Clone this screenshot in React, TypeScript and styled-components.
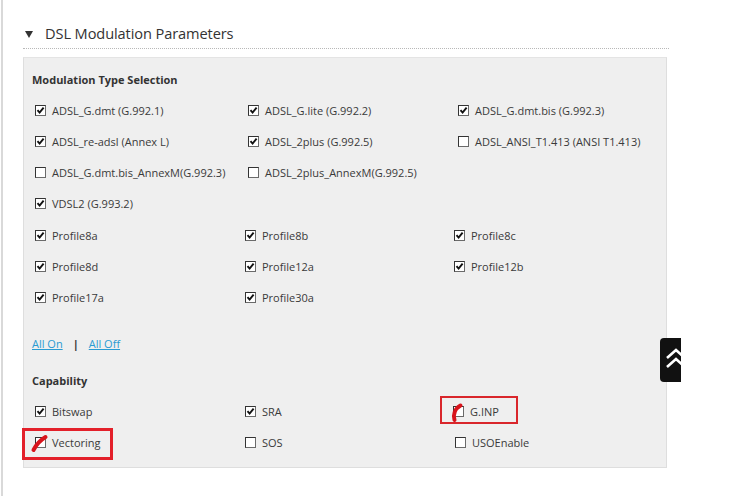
import React from "react";
import styled, { createGlobalStyle } from "styled-components";

const Global = createGlobalStyle`
  html, body { margin: 0; padding: 0; background: #fff; }
  body { font-family: "Open Sans", "Noto Sans", sans-serif; color: #333; }
`;

const Page = styled.div`
  position: relative;
  width: 754px;
  height: 496px;
  box-sizing: border-box;
  border-left: 2px solid #d9d9d9;
  margin-left: 1px;
  padding: 18px 0 0 20px;
`;

const Section = styled.div`
  width: 646px;
`;

const Header = styled.div`
  display: flex;
  align-items: center;
  gap: 12px;
  height: 30px;
  padding-left: 2px;
  border-bottom: 1px dotted #b8b8b8;
`;

const Triangle = styled.span`
  width: 0;
  height: 0;
  border-left: 4px solid transparent;
  border-right: 4px solid transparent;
  border-top: 7px solid #333;
  margin-top: 2px;
`;

const Title = styled.span`
  font-size: 14.6px;
  color: #333;
  letter-spacing: -0.1px;
`;

const Panel = styled.div`
  margin-top: 8px;
  width: 644px;
  box-sizing: border-box;
  background: #efefef;
  border: 1px solid #dedede;
  border-top-color: #e4e4e4;
  padding: 14px 8px 9px 8px;
`;

const Label = styled.div`
  font-size: 11px;
  font-weight: 700;
  line-height: 16px;
  color: #333;
`;

const Grid = styled.div<{ $cols: string; $top: number }>`
  display: grid;
  grid-template-columns: ${(p) => p.$cols};
  grid-auto-rows: 31px;
  margin-top: ${(p) => p.$top}px;
  padding-left: 3px;
`;

const Item = styled.label<{ $mark?: "thick" | "thin"; $shift?: number; $newRow?: boolean }>`
  position: relative;
  display: flex;
  align-items: center;
  gap: 6px;
  font-size: 11px;
  color: #3a3a3a;
  white-space: nowrap;
  margin-left: ${(p) => p.$shift ?? 0}px;
  ${(p) => (p.$newRow ? "grid-column: 1;" : "")}
  ${(p) =>
    p.$mark === "thick"
      ? `&::after{content:"";position:absolute;left:-13px;top:1px;width:85px;height:26px;border:3px solid #e3202a;}`
      : p.$mark === "thin"
      ? `&::after{content:"";position:absolute;left:-13px;top:0px;width:74px;height:24px;border:2px solid #d9262b;}`
      : ""}
`;

const Box = styled.span`
  position: relative;
  width: 11px;
  height: 11px;
  box-sizing: border-box;
  background: #fff;
  border: 1px solid #6a6a6a;
  border-top-color: #333;
  border-left-color: #333;
  display: inline-flex;
  align-items: center;
  justify-content: center;
  flex: none;
`;

const Stroke = styled.svg`
  position: absolute;
  left: -6px;
  top: -6px;
  overflow: visible;
`;

const Links = styled.div`
  display: flex;
  align-items: center;
  gap: 10px;
  margin-top: 23px;
  font-size: 11px;
  line-height: 16px;
`;

const A = styled.a`
  color: #2a9bd2;
  text-decoration: underline;
  cursor: pointer;
`;

const Sep = styled.span`
  color: #333;
  font-weight: 700;
`;

const CapLabel = styled(Label)`
  margin-top: 21px;
`;

const TopButton = styled.div`
  position: absolute;
  left: 657px;
  top: 338px;
  width: 21px;
  height: 44px;
  background: #111;
  border-radius: 4px 0 0 4px;
  overflow: hidden;
`;

const Check = () => (
  <svg width="9" height="9" viewBox="0 0 9 9">
    <path d="M1.5 4.2 L3.6 6.6 L7.6 1.6" stroke="#111" strokeWidth="1.9" fill="none" />
  </svg>
);

type Opt = {
  label: string;
  on: boolean;
  mark?: "thick" | "thin";
  red?: "sweep" | "curve";
  shift?: number;
  newRow?: boolean;
};

const CB = ({ label, on, mark, red, shift, newRow }: Opt) => (
  <Item $mark={mark} $shift={shift} $newRow={newRow}>
    <Box>
      {on && <Check />}
      {red === "sweep" && (
        <Stroke width="20" height="20" viewBox="0 0 20 20">
          <path d="M3.5 18 C6 13 9 9 15.5 5" stroke="#d8141c" strokeWidth="4" strokeLinecap="round" fill="none" />
        </Stroke>
      )}
      {red === "curve" && (
        <Stroke width="20" height="20" viewBox="0 0 20 20">
          <path d="M6.5 19 C5 14 6.5 8 12.5 4.5" stroke="#d8141c" strokeWidth="4" strokeLinecap="round" fill="none" />
        </Stroke>
      )}
    </Box>
    <span>{label}</span>
  </Item>
);

const modulation: Opt[] = [
  { label: "ADSL_G.dmt (G.992.1)", on: true },
  { label: "ADSL_G.lite (G.992.2)", on: true },
  { label: "ADSL_G.dmt.bis (G.992.3)", on: true },
  { label: "ADSL_re-adsl (Annex L)", on: true },
  { label: "ADSL_2plus (G.992.5)", on: true },
  { label: "ADSL_ANSI_T1.413 (ANSI T1.413)", on: false },
  { label: "ADSL_G.dmt.bis_AnnexM(G.992.3)", on: false },
  { label: "ADSL_2plus_AnnexM(G.992.5)", on: false },
  { label: "VDSL2 (G.993.2)", on: true, newRow: true },
];

const profiles: Opt[] = [
  { label: "Profile8a", on: true },
  { label: "Profile8b", on: true },
  { label: "Profile8c", on: true },
  { label: "Profile8d", on: true },
  { label: "Profile12a", on: true },
  { label: "Profile12b", on: true },
  { label: "Profile17a", on: true },
  { label: "Profile30a", on: true },
];

const caps: Opt[] = [
  { label: "Bitswap", on: true },
  { label: "SRA", on: true },
  { label: "G.INP", on: false, mark: "thin", red: "curve", shift: -1 },
  { label: "Vectoring", on: false, mark: "thick", red: "sweep" },
  { label: "SOS", on: false },
  { label: "USOEnable", on: false, shift: 1 },
];

export default function App() {
  return (
    <>
      <Global />
      <Page>
        <Section>
          <Header>
            <Triangle />
            <Title>DSL Modulation Parameters</Title>
          </Header>
          <Panel>
            <Label>Modulation Type Selection</Label>
            <Grid $cols="213px 210px 1fr" $top={7}>
              {modulation.map((o) => (
                <CB key={o.label} {...o} />
              ))}
            </Grid>
            <Grid $cols="210px 209px 1fr" $top={1}>
              {profiles.map((o) => (
                <CB key={o.label} {...o} />
              ))}
            </Grid>
            <Links>
              <A>All On</A>
              <Sep>|</Sep>
              <A>All Off</A>
            </Links>
            <CapLabel>Capability</CapLabel>
            <Grid $cols="210px 209px 1fr" $top={7}>
              {caps.map((o) => (
                <CB key={o.label} {...o} />
              ))}
            </Grid>
          </Panel>
        </Section>
        <TopButton>
          <svg width="21" height="44" viewBox="0 0 21 44">
            <path d="M7 20 L16 12 L25 20 M7 29 L16 21 L25 29" stroke="#fff" strokeWidth="2.6" fill="none" />
          </svg>
        </TopButton>
      </Page>
    </>
  );
}
